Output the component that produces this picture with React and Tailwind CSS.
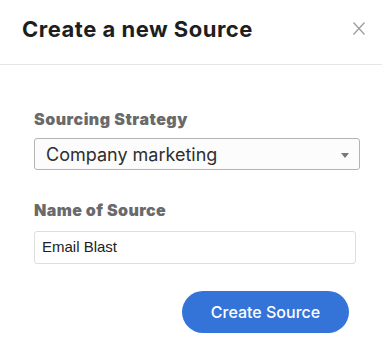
export default function App() {
  return (
    <div className="w-[382px] h-[353px] bg-white overflow-hidden" style={{ fontFamily: 'Inter, "Noto Sans", sans-serif' }}>
      <div className="h-[65px] border-b border-[#e6e6e6] flex items-start justify-between pl-[22px] pr-[17px] pt-[15px]">
        <h2 className="text-[22px] leading-[28px] font-bold text-[#1e1e1e] tracking-[0.5px]">Create a new Source</h2>
        <button className="mt-[6px] w-[12px] h-[14px] flex items-center justify-center text-[#9a9a9a]">
          <svg width="12" height="13" viewBox="0 0 12 13" fill="none" stroke="currentColor" strokeWidth="1.2">
            <path d="M0.5 0.5 L11.5 12.5 M11.5 0.5 L0.5 12.5" />
          </svg>
        </button>
      </div>

      <div className="pl-[34px] pt-[44px] flex flex-col">
        <label className="text-[16px] leading-[20px] font-black text-[#6a6a6a] tracking-[0.5px]">Sourcing Strategy</label>
        <div className="mt-[9px] w-[326px] h-[32px] border border-[#b3b3b3] rounded-[3px] bg-[#fcfcfc] flex items-center justify-between pl-[11px] pr-[10px]">
          <span className="text-[18px] text-[#2e2e2e]">Company marketing</span>
          <svg width="8" height="5" viewBox="0 0 8 5" className="mt-[2px]">
            <path d="M0 0 L8 0 L4 5 Z" fill="#777" />
          </svg>
        </div>

        <label className="mt-[30px] text-[16px] leading-[20px] font-black text-[#6a6a6a] tracking-[0.4px]">Name of Source</label>
        <div className="mt-[11px] w-[322px] h-[33px] border border-[#dedede] rounded-[3px] bg-white flex items-center pl-[7px]">
          <span className="text-[15px] text-[#222]" style={{ fontFamily: '"Liberation Sans", Arial, sans-serif' }}>Email Blast</span>
        </div>

        <div className="mt-[27px] w-[315px] flex justify-end">
          <button className="w-[167px] h-[42px] rounded-full bg-[#3474d8] text-white text-[16px] font-medium">
            Create Source
          </button>
        </div>
      </div>
    </div>
  );
}
